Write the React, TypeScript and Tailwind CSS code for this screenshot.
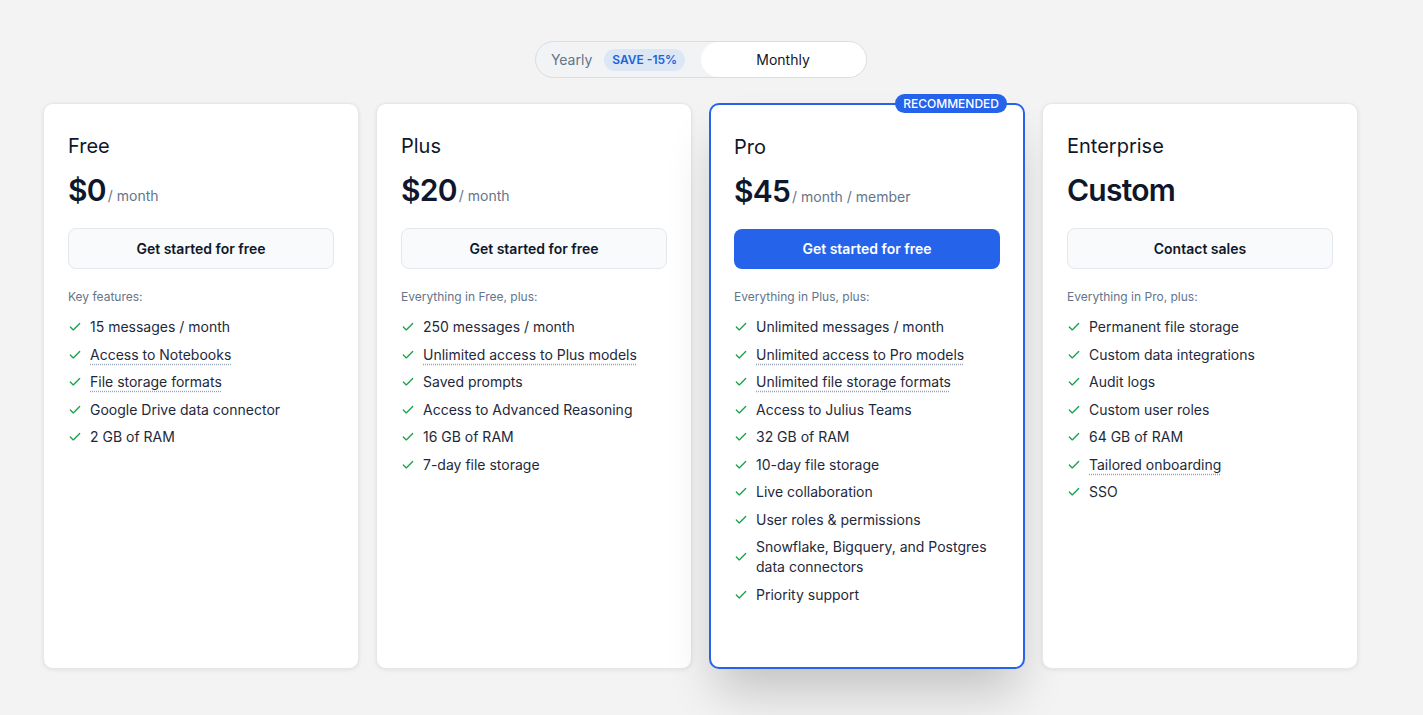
import { Check } from "lucide-react";

type Feature = { text: string; dotted?: boolean };

type Plan = {
  name: string;
  price: string;
  unit?: string;
  cta: string;
  intro: string;
  features: Feature[];
  featured?: boolean;
};

const plans: Plan[] = [
  {
    name: "Free",
    price: "$0",
    unit: "/ month",
    cta: "Get started for free",
    intro: "Key features:",
    features: [
      { text: "15 messages / month" },
      { text: "Access to Notebooks", dotted: true },
      { text: "File storage formats", dotted: true },
      { text: "Google Drive data connector" },
      { text: "2 GB of RAM" },
    ],
  },
  {
    name: "Plus",
    price: "$20",
    unit: "/ month",
    cta: "Get started for free",
    intro: "Everything in Free, plus:",
    features: [
      { text: "250 messages / month" },
      { text: "Unlimited access to Plus models", dotted: true },
      { text: "Saved prompts" },
      { text: "Access to Advanced Reasoning" },
      { text: "16 GB of RAM" },
      { text: "7-day file storage" },
    ],
  },
  {
    name: "Pro",
    price: "$45",
    unit: "/ month / member",
    cta: "Get started for free",
    intro: "Everything in Plus, plus:",
    featured: true,
    features: [
      { text: "Unlimited messages / month" },
      { text: "Unlimited access to Pro models", dotted: true },
      { text: "Unlimited file storage formats", dotted: true },
      { text: "Access to Julius Teams" },
      { text: "32 GB of RAM" },
      { text: "10-day file storage" },
      { text: "Live collaboration" },
      { text: "User roles & permissions" },
      { text: "Snowflake, Bigquery, and Postgres data connectors" },
      { text: "Priority support" },
    ],
  },
  {
    name: "Enterprise",
    price: "Custom",
    cta: "Contact sales",
    intro: "Everything in Pro, plus:",
    features: [
      { text: "Permanent file storage" },
      { text: "Custom data integrations" },
      { text: "Audit logs" },
      { text: "Custom user roles" },
      { text: "64 GB of RAM" },
      { text: "Tailored onboarding", dotted: true },
      { text: "SSO" },
    ],
  },
];

function PlanCard({ plan }: { plan: Plan }) {
  const featured = plan.featured;
  return (
    <div
      className={
        featured
          ? "relative flex h-[566px] flex-col rounded-[10px] border-2 border-[#2563eb] bg-white px-[23px] pt-[28px] shadow-[0_30px_50px_-8px_rgba(0,0,0,0.2)]"
          : "relative flex h-[566px] flex-col rounded-[10px] border border-[#e5e7eb] bg-white px-6 pt-[28px] shadow-[0_1px_4px_rgba(0,0,0,0.08)]"
      }
    >
      {featured && (
        <span className="absolute -top-[11px] right-4 rounded-full bg-[#2563eb] px-2 py-px text-xs font-medium leading-[17px] text-white">
          RECOMMENDED
        </span>
      )}
      <h3 className="text-xl leading-7 font-normal text-[#0f172a]">{plan.name}</h3>
      <div className="mt-3 flex h-9 items-baseline">
        <span className="text-[30px] leading-9 font-semibold tracking-tight text-[#0f172a]">
          {plan.price}
        </span>
        {plan.unit && (
          <span className="ml-0.5 text-sm leading-5 text-[#64748b]">{plan.unit}</span>
        )}
      </div>
      <button
        className={
          featured
            ? "mt-5 h-[40px] w-full rounded-lg bg-[#2563eb] text-sm font-semibold text-white"
            : "mt-5 h-[41px] w-full rounded-lg border border-[#e2e8f0] bg-[#f8fafc] text-sm font-semibold text-[#0f172a]"
        }
      >
        {plan.cta}
      </button>
      <p className="mt-5 text-xs leading-4 text-[#64748b]">{plan.intro}</p>
      <ul className="mt-3 flex flex-col gap-[7.5px]">
        {plan.features.map((f) => (
          <li key={f.text} className="flex items-center gap-2 text-sm leading-5 text-[#1e293b]">
            <Check className="h-3.5 w-3.5 shrink-0 text-[#16a34a]" strokeWidth={2.25} />
            <span
              className={
                f.dotted
                  ? "underline decoration-dotted decoration-[#94a3b8] underline-offset-4"
                  : ""
              }
            >
              {f.text}
            </span>
          </li>
        ))}
      </ul>
    </div>
  );
}

export default function App() {
  return (
    <div
      className="min-h-[715px] bg-[#f3f3f3] pt-[41px] pl-[43px]"
      style={{ fontFamily: "Inter, 'Noto Sans', sans-serif" }}
    >
      <div className="flex w-[1315px] flex-col items-center">
        <div className="grid h-[37px] w-[332px] grid-cols-2 rounded-full border border-[#d9dde3] bg-[#f1f3f5]">
          <div className="flex items-center justify-center gap-3 text-sm text-[#64748b]">
            <span>Yearly</span>
            <span className="rounded-full bg-[#dbe7f5] px-2 py-[3px] text-xs font-semibold text-[#1d64d8]">
              SAVE -15%
            </span>
          </div>
          <div className="flex items-center justify-center rounded-full bg-white text-sm text-[#0f172a]">
            Monthly
          </div>
        </div>
        <div className="mt-[25px] grid grid-cols-[repeat(4,316px)] gap-[17px]">
          {plans.map((p) => (
            <PlanCard key={p.name} plan={p} />
          ))}
        </div>
      </div>
    </div>
  );
}
